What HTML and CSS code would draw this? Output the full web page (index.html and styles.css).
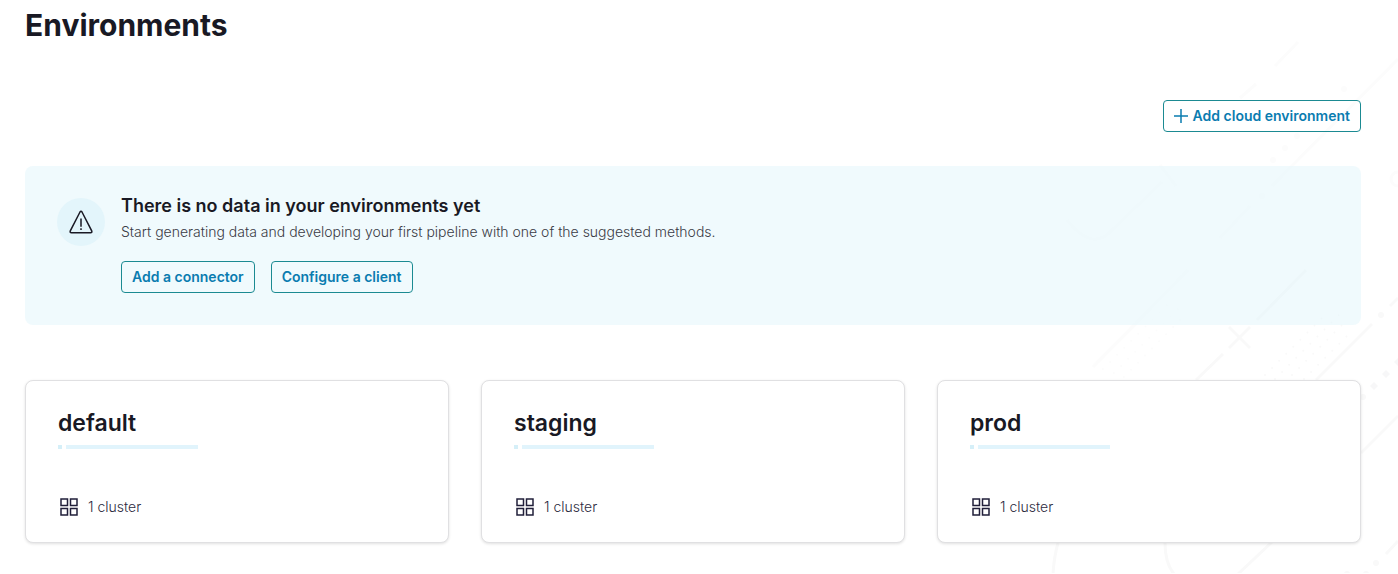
FILE: index.html
```html
<!DOCTYPE html>
<html lang="en">
<head>
  <meta charset="utf-8">
  <title>Environments</title>
  <meta name="viewport" content="width=device-width, initial-scale=1">
  <link rel="stylesheet" href="styles.css">
</head>
<body>
  <svg class="decor" width="358" height="574" viewBox="1040 0 358 574" aria-hidden="true">
    <g class="decor-faint">
      <path d="M1275 66L1298 42M1240 98L1256 84M1272 186L1398 59M1220 238L1250 206M1067 220C1085 243 1100 244 1112 230L1162 182M1160 165L1176 186"/>
      <circle cx="1398" cy="179" r="7"/>
      <path class="squares" d="M1344 89h.01M1297 136h.01M1285 148h.01M1273 160h.01M1262 196h.01"/>
      <path d="M1093 367L1188 270"/>
      <path class="dots" d="M1103 369L1173 299M1114 373L1184 303M1124 377L1187 313"/>
    </g>
    <g class="decor-strong">
      <path d="M1196 380L1223 354M1229 348L1250 327M1229 327L1250 348M1257 320L1306 270M1316 380L1372 324M1390 306L1398 298M1361 453L1398 416"/>
      <path d="M1238 574L1272 542M1165 543Q1165 563 1174 574M1058 543Q1054 557 1053 574M1386 554L1398 541"/>
      <path class="squares" d="M1381 315h.01M1376 563h.01M1347 574h.01M1366 574h.01M1363 397h.01"/>
      <path class="diamonds" d="M1374 382l4 4l-4 4l-4-4zM1386 370l4 4l-4 4l-4-4zM1398 358l4 4l-4 4l-4-4z"/>
      <path class="dots" d="M1265 375L1328 312M1275 379L1345 309M1292 375L1342 325M1304 379L1353 330"/>
    </g>
  </svg>

  <main class="page">
    <h1 class="page-title">Environments</h1>

    <div class="toolbar">
      <button class="button" type="button">
        <svg class="plus" width="14" height="14" viewBox="0 0 14 14" aria-hidden="true"><path d="M7 0v14M0 7h14"/></svg>
        Add cloud environment
      </button>
    </div>

    <section class="banner" aria-labelledby="banner-title">
      <span class="banner-icon">
        <svg width="26" height="26" viewBox="0 0 26 26" aria-hidden="true">
          <path d="M12 3Q13 1.4 14 3L23.7 21.8Q24.4 23.7 22.5 23.7H3.5Q1.6 23.7 2.3 21.8Z"/>
          <path d="M13 9.5v8.3M13 19.3v1.7"/>
        </svg>
      </span>
      <div class="banner-body">
        <h2 class="banner-title" id="banner-title">There is no data in your environments yet</h2>
        <p class="banner-text">Start generating data and developing your first pipeline with one of the suggested methods.</p>
        <div class="banner-actions">
          <button class="button" type="button">Add a connector</button>
          <button class="button" type="button">Configure a client</button>
        </div>
      </div>
    </section>

    <section class="cards" aria-label="Environment list">
      <article class="card">
        <h2 class="card-title">default</h2>
        <div class="card-rule"></div>
        <p class="card-meta">
          <svg width="18" height="18" viewBox="0 0 18 18" aria-hidden="true"><path d="M1 1h6.5v6.5H1zM10.5 1H17v6.5h-6.5zM1 10.5h6.5V17H1zM10.5 10.5H17V17h-6.5z"/></svg>
          1 cluster
        </p>
      </article>
      <article class="card">
        <h2 class="card-title">staging</h2>
        <div class="card-rule"></div>
        <p class="card-meta">
          <svg width="18" height="18" viewBox="0 0 18 18" aria-hidden="true"><path d="M1 1h6.5v6.5H1zM10.5 1H17v6.5h-6.5zM1 10.5h6.5V17H1zM10.5 10.5H17V17h-6.5z"/></svg>
          1 cluster
        </p>
      </article>
      <article class="card">
        <h2 class="card-title">prod</h2>
        <div class="card-rule"></div>
        <p class="card-meta">
          <svg width="18" height="18" viewBox="0 0 18 18" aria-hidden="true"><path d="M1 1h6.5v6.5H1zM10.5 1H17v6.5h-6.5zM1 10.5h6.5V17H1zM10.5 10.5H17V17h-6.5z"/></svg>
          1 cluster
        </p>
      </article>
    </section>
  </main>
</body>
</html>
```
FILE: styles.css
```css
* {
  box-sizing: border-box;
}

body {
  position: relative;
  margin: 0;
  background: #fff;
  color: #191924;
  font-family: Inter, "Liberation Sans", sans-serif;
}

h1,
h2,
p {
  margin: 0;
}

/* Background artwork behind the content */
.decor {
  position: absolute;
  top: 0;
  right: 0;
  z-index: -1;
  fill: none;
  stroke-width: 3;
}

.decor-faint {
  stroke: #fcfcfc;
}

.decor-strong {
  stroke: #f9f9f9;
}

.decor .squares {
  stroke-width: 6;
  stroke-linecap: round;
}

.decor .diamonds {
  fill: #f7f7f8;
  stroke: none;
}

.decor .dots {
  stroke-width: 2;
  stroke-linecap: round;
  stroke-dasharray: 0 10;
}

.page {
  padding: 5px 37px 30px 25px;
}

.page-title {
  font-size: 30px;
  font-weight: 700;
  line-height: 40px;
}

.toolbar {
  display: flex;
  justify-content: flex-end;
  margin-top: 55px;
}

.button {
  display: inline-flex;
  align-items: center;
  gap: 5px;
  height: 32px;
  padding: 0 10px;
  border: 1px solid #1b8a92;
  border-radius: 4px;
  background: transparent;
  color: #0a7cb0;
  font-family: inherit;
  font-size: 14px;
  font-weight: 600;
  line-height: 20px;
  cursor: pointer;
}

.plus {
  fill: none;
  stroke: currentColor;
  stroke-width: 1.5;
}

.banner {
  display: flex;
  gap: 16px;
  margin-top: 34px;
  padding: 26px 32px 32px;
  border-radius: 8px;
  background: rgba(226, 246, 252, 0.5);
}

.banner-icon {
  display: flex;
  flex: none;
  align-items: center;
  justify-content: center;
  width: 48px;
  height: 48px;
  margin-top: 6px;
  border-radius: 50%;
  background: #e3f5fb;
}

.banner-icon svg {
  fill: none;
  stroke: #191924;
  stroke-width: 1.5;
}

.banner-title {
  font-size: 18px;
  font-weight: 600;
  line-height: 28px;
}

.banner-text {
  color: #3a3b45;
  font-size: 14px;
  font-weight: 300;
  line-height: 24px;
}

.banner-actions {
  display: flex;
  gap: 16px;
  margin-top: 17px;
}

.cards {
  display: grid;
  grid-template-columns: repeat(3, 1fr);
  gap: 32px;
  margin-top: 55px;
}

.card {
  padding: 24px 32px 23px;
  border: 1px solid #e0e0e2;
  border-radius: 8px;
  background: #fff;
  box-shadow: 0 1px 3px rgba(0, 0, 0, 0.12);
}

.card-title {
  font-size: 23px;
  font-weight: 600;
  line-height: 36px;
}

.card-rule {
  height: 4px;
  width: 140px;
  margin-top: 4px;
  background: linear-gradient(to right, #d5eff8 4px, #fff 4px, #fff 8px, #e1f4fc 8px);
}

.card-meta {
  display: flex;
  align-items: center;
  gap: 10px;
  margin-top: 46px;
  padding-left: 2px;
  color: #2d2b40;
  font-size: 14px;
  font-weight: 300;
  line-height: 24px;
}

.card-meta svg {
  fill: none;
  stroke: #211f3a;
  stroke-width: 1.5;
}
```
